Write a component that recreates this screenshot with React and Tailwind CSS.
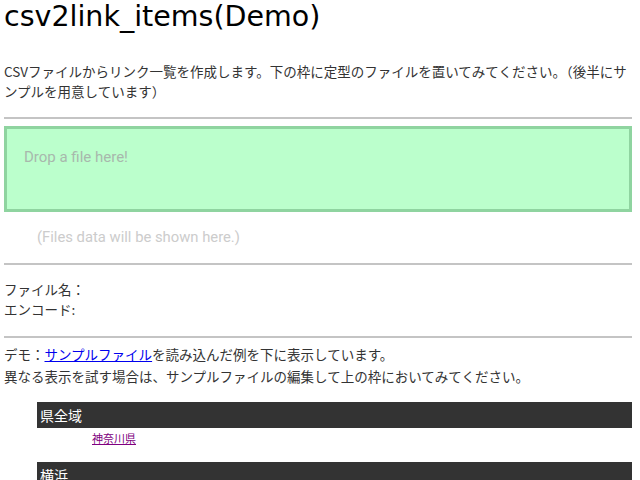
export default function App() {
  return (
    <div className="bg-white min-h-[480px] pl-[4px] pr-[8px] text-[#333] font-['Noto_Sans_CJK_JP',sans-serif] text-[13.5px]">
      <h1 className="text-[28.5px] leading-[33px] font-normal text-black font-['DejaVu_Sans',sans-serif]">
        csv2link_items(Demo)
      </h1>
      <p className="mt-[28px] leading-[20px] whitespace-nowrap">
        CSVファイルからリンク一覧を作成します。下の枠に定型のファイルを置いてみてください。（後半にサ
        <br />
        ンプルを用意しています）
      </p>
      <div className="mt-[16px] border-t-2 border-[#c4c4c4]" />
      <div className="mt-[7px] h-[86px] bg-[#bbffcc] border-[3px] border-[#8fd4a0] pt-[18px] pl-[17px]">
        <div className="leading-[20px] text-[15px] text-[#a8b8ac] font-['Roboto',sans-serif]">
          Drop a file here!
        </div>
      </div>
      <div className="mt-[15px] pl-[33px] leading-[20px] text-[14.8px] text-[#cccccc] font-['Roboto',sans-serif]">
        (Files data will be shown here.)
      </div>
      <div className="mt-[16px] border-t-2 border-[#c4c4c4]" />
      <div className="mt-[14px] leading-[20px]">
        <div>ファイル名：</div>
        <div>エンコード:</div>
      </div>
      <div className="mt-[17px] border-t-2 border-[#c4c4c4]" />
      <div className="mt-[5px] leading-[22px]">
        <div>
          デモ：<a href="#" className="text-[#0000ee] underline">サンプルファイル</a>を読み込んだ例を下に表示しています。
        </div>
        <div>異なる表示を試す場合は、サンプルファイルの編集して上の枠においてみてください。</div>
      </div>
      <div className="ml-[33px]">
        <div className="mt-[15px] h-[26px] bg-[#333333] text-white pl-[3px] leading-[26px] text-[14px]">県全域</div>
        <div className="mt-[2px] pl-[55px] leading-[16px] text-[11px]">
          <a href="#" className="text-[#800080] underline">神奈川県</a>
        </div>
        <div className="mt-[16px] h-[26px] bg-[#333333] text-white pl-[3px] leading-[26px] text-[14px]">横浜</div>
      </div>
    </div>
  );
}
